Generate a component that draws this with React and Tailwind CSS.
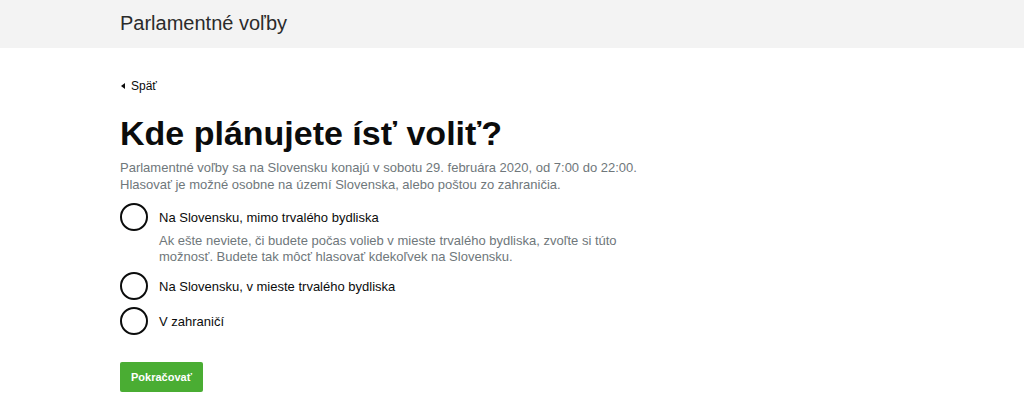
import React from 'react';

const options = [
  {
    label: 'Na Slovensku, mimo trvalého bydliska',
    hint: 'Ak ešte neviete, či budete počas volieb v mieste trvalého bydliska, zvoľte si túto možnosť. Budete tak môcť hlasovať kdekoľvek na Slovensku.',
  },
  { label: 'Na Slovensku, v mieste trvalého bydliska' },
  { label: 'V zahraničí' },
];

function Radio({ label, hint }) {
  return (
    <div className="flex flex-col">
      <label className="flex items-center gap-[11px] cursor-pointer">
        <span className="w-[28px] h-[28px] rounded-full border-2 border-[#0b0c0c] shrink-0" />
        <span className="text-[13px] leading-[17px] text-[#0b0c0c]">{label}</span>
      </label>
      {hint && (
        <p className="ml-[39px] mt-[2px] max-w-[470px] text-[13px] leading-[16px] text-[#6f777b]">
          {hint}
        </p>
      )}
    </div>
  );
}

export default function App() {
  return (
    <div className="min-h-[401px] bg-white font-['Liberation_Sans',Arial,sans-serif]">
      {/* Header */}
      <header className="h-[48px] bg-[#f3f3f3] flex items-center px-[120px] pb-[2px]">
        <span className="text-[20px] text-[#2b2b2b]">Parlamentné voľby</span>
      </header>

      <main className="px-[120px] pt-[30px]">
        <a href="#" className="flex items-center gap-[6px] h-[16px] text-[12px] text-[#0b0c0c]">
          <span className="w-0 h-0 border-y-[3.5px] border-y-transparent border-r-[4px] border-r-[#0b0c0c] ml-[1px]" />
          Späť
        </a>

        <h1 className="mt-[19px] text-[34px] leading-[40px] font-bold text-[#0b0c0c]">
          Kde plánujete ísť voliť?
        </h1>

        <p className="mt-[6px] text-[13px] leading-[17px] text-[#6f777b]">
          Parlamentné voľby sa na Slovensku konajú v sobotu 29. februára 2020, od 7:00 do 22:00.
          <br />
          Hlasovať je možné osobne na území Slovenska, alebo poštou zo zahraničia.
        </p>

        <div className="mt-[10px] flex flex-col gap-[7px]">
          {options.map((o) => (
            <Radio key={o.label} {...o} />
          ))}
        </div>

        <button className="mt-[27px] h-[30px] w-[83px] rounded-[2px] bg-[#4aad33] text-white text-[11px] font-bold">
          Pokračovať
        </button>
      </main>
    </div>
  );
}
